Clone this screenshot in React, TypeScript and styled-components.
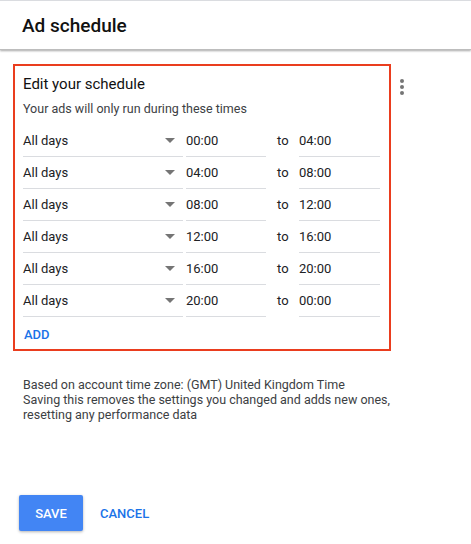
import React from 'react';
import styled, { createGlobalStyle } from 'styled-components';

const GlobalStyle = createGlobalStyle`
  body {
    margin: 0;
    background: #fff;
    font-family: Roboto, "Liberation Sans", Arial, sans-serif;
    color: #202124;
  }
`;

const Page = styled.div`
  width: 471px;
  height: 544px;
  overflow: hidden;
  border-top: 1px solid #dadce0;
  box-sizing: border-box;
`;

const Header = styled.header`
  height: 48px;
  display: flex;
  align-items: center;
  padding-left: 22px;
  box-shadow: 0 1px 2px rgba(0, 0, 0, 0.35);
  border-bottom: 1px solid #bdbdbd;
  h1 {
    margin: 0;
    font-size: 19px;
    font-weight: 500;
    color: #111;
  }
`;

const Body = styled.div`
  padding: 14px 0 0 13px;
`;

const CardRow = styled.div`
  display: flex;
  align-items: flex-start;
`;

const Card = styled.div`
  width: 378px;
  box-sizing: border-box;
  border: 2px solid #ea3d1e;
  padding: 8px 9px 7px 8px;
`;

const Title = styled.div`
  font-size: 15px;
  line-height: 20px;
  color: #111;
`;

const Subtitle = styled.div`
  margin-top: 7px;
  font-size: 12.5px;
  line-height: 16px;
  color: #3c4043;
`;

const Rows = styled.div`
  margin-top: 8px;
`;

const Row = styled.div`
  display: grid;
  grid-template-columns: 160px 80px 27px 81px;
  column-gap: 3px;
  height: 32px;
`;

const Field = styled.div`
  display: flex;
  align-items: center;
  justify-content: space-between;
  font-size: 13px;
  color: #202124;
  border-bottom: 1px solid #dadce0;
`;

const Arrow = styled.span`
  width: 0;
  height: 0;
  border-left: 5px solid transparent;
  border-right: 5px solid transparent;
  border-top: 5px solid #757575;
  margin-right: 8px;
`;

const To = styled.div`
  display: flex;
  align-items: center;
  padding-left: 8px;
  font-size: 13px;
  color: #202124;
  border-bottom: 1px solid transparent;
`;

const TextButton = styled.button`
  border: none;
  background: none;
  font-family: inherit;
  font-size: 13px;
  font-weight: 500;
  color: #1a73e8;
  padding: 0;
  cursor: pointer;
`;

const AddButton = styled(TextButton)`
  margin: 10px 0 0 1px;
  display: block;
`;

const Kebab = styled.div`
  margin: 15px 0 0 9px;
  display: flex;
  flex-direction: column;
  gap: 2px;
  span {
    width: 4px;
    height: 4px;
    border-radius: 50%;
    background: #757575;
  }
`;

const Note = styled.p`
  margin: 26px 0 0 10px;
  font-size: 12.5px;
  line-height: 15px;
  color: #3c4043;
  width: 400px;
`;

const Actions = styled.div`
  display: flex;
  align-items: center;
  gap: 17px;
  margin: 73px 0 0 6px;
`;

const SaveButton = styled.button`
  width: 64px;
  height: 36px;
  border: none;
  border-radius: 2px;
  background: #4285f4;
  color: #fff;
  font-family: inherit;
  font-size: 13px;
  font-weight: 500;
  box-shadow: 0 1px 3px rgba(0, 0, 0, 0.3);
`;

const rows = [
  ['00:00', '04:00'],
  ['04:00', '08:00'],
  ['08:00', '12:00'],
  ['12:00', '16:00'],
  ['16:00', '20:00'],
  ['20:00', '00:00'],
];

export default function App() {
  return (
    <Page>
      <GlobalStyle />
      <Header>
        <h1>Ad schedule</h1>
      </Header>
      <Body>
        <CardRow>
          <Card>
            <Title>Edit your schedule</Title>
            <Subtitle>Your ads will only run during these times</Subtitle>
            <Rows>
              {rows.map(([from, to], i) => (
                <Row key={i}>
                  <Field>
                    All days
                    <Arrow />
                  </Field>
                  <Field>{from}</Field>
                  <To>to</To>
                  <Field>{to}</Field>
                </Row>
              ))}
            </Rows>
            <AddButton>ADD</AddButton>
          </Card>
          <Kebab>
            <span />
            <span />
            <span />
          </Kebab>
        </CardRow>
        <Note>
          Based on account time zone: (GMT) United Kingdom Time
          <br />
          Saving this removes the settings you changed and adds new ones,
          <br />
          resetting any performance data
        </Note>
        <Actions>
          <SaveButton>SAVE</SaveButton>
          <TextButton>CANCEL</TextButton>
        </Actions>
      </Body>
    </Page>
  );
}
